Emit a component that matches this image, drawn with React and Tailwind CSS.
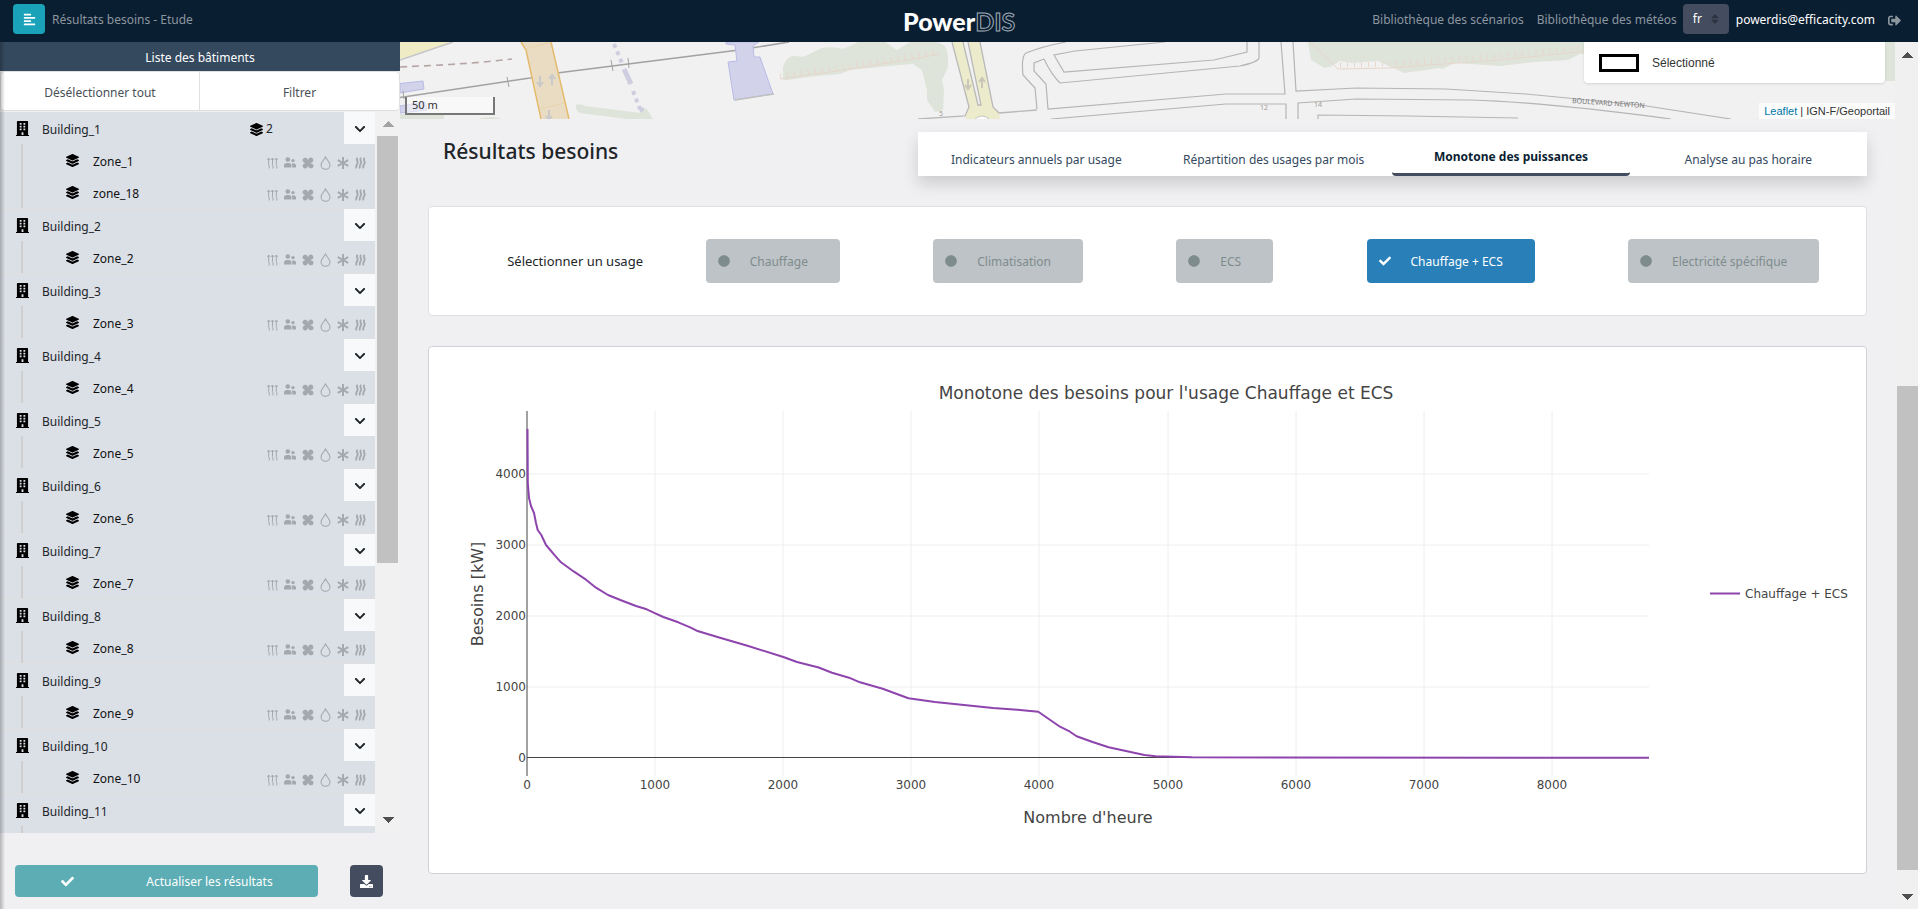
import React, { useState } from "react";
import {
  FaAlignLeft,
  FaAsterisk,
  FaBuilding,
  FaCheck,
  FaChevronDown,
  FaCircle,
  FaDownload,
  FaLayerGroup,
  FaSignOutAlt,
  FaSort,
} from "react-icons/fa";

const BUILDINGS = [
  { name: "Building_1", zones: ["Zone_1", "zone_18"] },
  { name: "Building_2", zones: ["Zone_2"] },
  { name: "Building_3", zones: ["Zone_3"] },
  { name: "Building_4", zones: ["Zone_4"] },
  { name: "Building_5", zones: ["Zone_5"] },
  { name: "Building_6", zones: ["Zone_6"] },
  { name: "Building_7", zones: ["Zone_7"] },
  { name: "Building_8", zones: ["Zone_8"] },
  { name: "Building_9", zones: ["Zone_9"] },
  { name: "Building_10", zones: ["Zone_10"] },
  { name: "Building_11", zones: [] },
];

const TABS = [
  "Indicateurs annuels par usage",
  "Répartition des usages par mois",
  "Monotone des puissances",
  "Analyse au pas horaire",
];

const USAGES = ["Chauffage", "Climatisation", "ECS", "Chauffage + ECS", "Electricité spécifique"];

function HeatIcon() {
  return (
    <svg viewBox="0 0 11 12" className="h-3 w-[11px]" fill="none" stroke="currentColor" strokeWidth="1">
      <path d="M2 11.500c1.200-2-1-3.500-.3-5.500V1.500M5.800 11.500c1.200-2-1-3.500-.3-5.500V1.500M9.600 11.500c1.200-2-1-3.500-.3-5.500V1.500" />
      <path d="M.3 2.800 1.700 1 3.100 2.800M4.100 2.800 5.500 1l1.400 1.800M7.900 2.800 9.300 1l1.400 1.800" />
    </svg>
  );
}

function PeopleIcon() {
  return (
    <svg viewBox="0 0 12 11" className="h-[11px] w-3" fill="currentColor">
      <circle cx="3.800" cy="2.500" r="2.300" />
      <circle cx="9" cy="3.600" r="1.700" />
      <path d="M0 10.500V8.600C0 7 1.200 6 2.800 6h2C6.400 6 7.400 7 7.400 8.600v1.900Z" />
      <path d="M8.200 10.500V8.400c0-.8-.3-1.400-.7-1.900h2.300c1.300 0 2.200.8 2.200 2v2Z" />
    </svg>
  );
}

function FanIcon() {
  const blade = "M6 6C4.200 6.400.6 5.900.5 3.300.5 1.200 2.400.4 4 .8 5.700 1.300 6.300 4 6 6Z";
  return (
    <svg viewBox="0 0 12 12" className="h-3 w-3" fill="currentColor">
      <path d={blade} />
      <path d={blade} transform="rotate(90 6 6)" />
      <path d={blade} transform="rotate(180 6 6)" />
      <path d={blade} transform="rotate(270 6 6)" />
    </svg>
  );
}

function DropIcon() {
  return (
    <svg viewBox="0 0 11 14" className="h-[14px] w-[11px]" fill="none" stroke="currentColor" strokeWidth="1.1">
      <path d="M5.500 1C4.300 3.600 1 6.300 1 9a4.500 4.300 0 0 0 9 0C10 6.300 6.700 3.600 5.500 1Z" />
    </svg>
  );
}

function WavesIcon() {
  return (
    <svg viewBox="0 0 11 12" className="h-3 w-[11px]" fill="none" stroke="currentColor" strokeWidth="1.800">
      <path d="M2.500.8C.5 3.300 3.500 4.200 2.600 6.200S.5 9 1.500 11.300M6 .8C4 3.300 7 4.200 6.100 6.200S4 9 5 11.300M9.500.8C7.500 3.300 10.500 4.200 9.600 6.200S7.500 9 8.500 11.300" />
    </svg>
  );
}

function Caret({ up, className }) {
  return (
    <svg viewBox="0 0 12 6" className={className} fill="currentColor" shapeRendering="crispEdges">
      <path d={up ? "M0 6 6 0l6 6Z" : "M0 0h12L6 6Z"} />
    </svg>
  );
}

function Header() {
  return (
    <header className="relative flex h-[42px] shrink-0 items-center justify-between bg-[#0a1e32] pb-1 pl-[13px] pr-[17px] text-[#8c969f]">
      <div className="flex items-center gap-[7px]">
        <button aria-label="Menu" className="flex h-[30px] w-8 items-center justify-center rounded bg-[#19a2b8] text-white">
          <FaAlignLeft size={13} />
        </button>
        <span className="pt-[2px]">Résultats besoins - Etude</span>
      </div>
      <div className="absolute left-1/2 top-[7px] flex -translate-x-[56px] font-['Lato',sans-serif] text-[25px] font-black leading-[28px]">
        <span className="text-white">Power</span>
        <span className="font-bold text-[#0a1e32] [-webkit-text-stroke:1px_#a0abb6]">DIS</span>
      </div>
      <nav className="flex items-center">
        <a href="#scenarios" className="mr-[13px] pt-[2px]">Bibliothèque des scénarios</a>
        <a href="#meteos" className="mr-[6px] pt-[2px]">Bibliothèque des météos</a>
        <div className="relative mr-[7px]">
          <select
            aria-label="Langue"
            defaultValue="fr"
            className="h-[30px] w-[46px] appearance-none rounded bg-[#434d5f] pl-[10px] text-white"
          >
            <option value="fr">fr</option>
            <option value="en">en</option>
          </select>
          <FaSort size={12} className="pointer-events-none absolute right-2 top-[9px] text-[#2b3440]" />
        </div>
        <span className="mr-[13px] pt-[2px] text-white">powerdis@efficacity.com</span>
        <button aria-label="Se déconnecter" className="pt-[2px]">
          <FaSignOutAlt size={13} />
        </button>
      </nav>
    </header>
  );
}

function Building({ name, zones }) {
  return (
    <li className="border-b border-[#dfdfdf]">
      <div className="flex h-8 items-center pl-4 text-[#212529]">
        <FaBuilding size={15} className="w-[13px] text-black" />
        <span className="ml-[13px] w-[208px] pt-[3px]">{name}</span>
        {zones.length > 1 && (
          <span className="flex items-center gap-[3px] pt-[2px]">
            <FaLayerGroup size={13} className="text-black" />
            {zones.length}
          </span>
        )}
        <button
          aria-label={`Replier ${name}`}
          className="ml-auto flex h-8 w-[31px] items-center justify-center bg-[#f8f9fb] pt-[2px] text-[#1f2529]"
        >
          <FaChevronDown size={12} />
        </button>
      </div>
      <ul className="ml-[21px] min-h-8 border-l-2 border-[#cfcfcf]">
        {zones.map((zone) => (
          <li key={zone} className="flex h-8 items-center pl-[43px] pr-[9px] text-[#111]">
            <FaLayerGroup size={13} className="text-black" />
            <span className="ml-[14px] pt-[3px]">{zone}</span>
            <span className="ml-auto flex items-center gap-[6px] pt-[5px] text-[#a3a8af]">
              <HeatIcon />
              <PeopleIcon />
              <FanIcon />
              <DropIcon />
              <FaAsterisk size={12} />
              <WavesIcon />
            </span>
          </li>
        ))}
      </ul>
    </li>
  );
}

function Sidebar() {
  return (
    <aside className="relative flex w-[400px] shrink-0 flex-col">
      <h2 className="h-[29px] bg-[#34495e] text-center leading-[31px] text-white">Liste des bâtiments</h2>
      <div className="grid h-10 grid-cols-2 overflow-hidden rounded border border-[#dfdfdf] bg-white text-[#495057]">
        <button className="border-r border-[#dfdfdf] pt-1">Désélectionner tout</button>
        <button className="pt-1">Filtrer</button>
      </div>
      <div className="flex min-h-0 flex-1 pt-px">
        <ul className="min-w-0 flex-1 overflow-hidden bg-[#dbdfe6]">
          {BUILDINGS.map((b) => (
            <Building key={b.name} {...b} />
          ))}
        </ul>
        <div className="flex w-[25px] flex-col items-center justify-between bg-[#f1f1f1] pb-[10px] pt-[9px]">
          <Caret up className="h-[6px] w-3 text-[#a3a3a3]" />
          <div className="mt-[9px] h-[427px] w-[21px] bg-[#c1c1c1]" />
          <Caret className="mt-auto h-[6px] w-3 text-[#505050]" />
        </div>
      </div>
      <div className="flex h-[76px] items-center justify-between pl-[15px] pr-[17px] pt-5 text-white">
        <button className="flex h-8 w-[303px] items-center rounded bg-[#5cadb4]">
          <FaCheck size={13} className="ml-[46px]" />
          <span className="flex-1 pl-[27px] pt-[2px] text-center">Actualiser les résultats</span>
        </button>
        <button aria-label="Télécharger" className="flex h-8 w-[33px] items-center justify-center rounded bg-[#434d5f]">
          <FaDownload size={13} />
        </button>
      </div>
      <div className="pointer-events-none absolute inset-y-0 left-0 w-[5px] bg-gradient-to-r from-black/25 to-transparent" />
    </aside>
  );
}

function RoadArrow({ x, y, down, color }) {
  const d = down ? "M0-5V4M-3 1 0 5 3 1" : "M0 5V-4M-3-1 0-5 3-1";
  return <path d={d} transform={`translate(${x} ${y})`} fill="none" stroke={color} strokeWidth="2" />;
}

function MapStrip() {
  return (
    <section className="relative h-[77px] shrink-0 overflow-hidden bg-[#f1f1f1]">
      <svg viewBox="400 42 1495 77" preserveAspectRatio="xMinYMin slice" className="block h-full w-full" fill="none">
        <path d="M400 42h52l-52 17Z" fill="#efecc5" />
        <path d="M400 60 453 42" stroke="#c4c4c4" strokeWidth="1.500" />
        <path d="M400 67c40-2 70-3 112-8" stroke="#b5a5a5" strokeWidth="1.600" strokeDasharray="7 5" />
        <path d="M400 83.500 423 81l1 8-24 4ZM400 106l25-4 2 8-27 3Z" fill="#d2d2ea" stroke="#b9bbe6" />
        <path d="M400 114h44v5h-44ZM480 118l10-1 10 1v1h-20Z" fill="#dee4d9" />
        <path d="M400 97.500 530 78l27-5 182-23 50-8" stroke="#a2a2a2" strokeWidth="1.600" />
        <path d="m507 77 2 10M611 60l2 11M628 58l1 10M403 91l1 8" stroke="#a2a2a2" />
        <path d="m521 42 5 8 15 69h28L551 42Z" fill="#e9dcc2" />
        <path d="m521 42 5 8 15 69M551 42l18 77" stroke="#e4bb6d" strokeWidth="1.500" />
        <path d="m525 49 28-7M539 109l26-6" stroke="#ead0a0" strokeWidth=".6" />
        <RoadArrow x={540} y={81} down color="#c9c9c9" />
        <RoadArrow x={552} y={80} color="#c9c9c9" />
        <RoadArrow x={549} y={115} down color="#c9c9c9" />
        <path d="m614 44 8 19M633 91l7 18" stroke="#cfcde0" strokeWidth="4" strokeDasharray="4 4" />
        <path d="m624 69 7 15M641 108l8 16" stroke="#cfcde0" strokeWidth="5" />
        <path d="M576 105q5-2 9 1l56 7 5-5 7 11h-27l-46-6q-5-3-4-8Z" fill="#dee4d9" />
        <path d="M726 42h33l-6 4 1 11h6l13 37-39 6-6-38 9-1-2-16-9-1Z" fill="#d2d2ea" stroke="#b9bbe6" />
        <path d="m735 100 39-6" stroke="#c0c0c0" strokeWidth="1.500" />
        <path
          d="M783 80V67q3-9 9-11 6 0 11 1l19-9q10-2 21 1l14-6v-1h28l12 8 13-8h25q8 1 11 6l2 8v11l-6 13 2 10-1 20-8 2-8-12v-10l-5-20-9-6-13 1-20 2-30 3-10 4q-30 2-52 6Z"
          fill="#dee4d9"
        />
        <path d="m780 79 70-10 70-11 19-4" stroke="#e8d6cc" />
        <path d="m780 76 70-10 70-11 19-4" stroke="#e8d6cc" strokeWidth="5" strokeDasharray="1 6" />
        <path d="m952 42 17 65-4 12h35l-1-6-6-6-13-65Z" fill="#ecebcb" />
        <path d="m963 42 15 63h3L968 42Z" fill="#f1f1f1" />
        <path d="m952 42 17 65-4 9-47 3M980 42l13 65 6 6 38-3M963 42l15 63h3L968 42" stroke="#b9b9b9" strokeWidth="1.300" />
        <path d="M975 119q7-6 14 0" stroke="#c5c5c5" fill="#fff" />
        <RoadArrow x={968} y={84} down color="#c9c6b8" />
        <RoadArrow x={982} y={83} color="#c9c6b8" />
        <g stroke="#b5b5b5" strokeWidth="1.200">
          <path d="M1066 42q-22 4-40 11-5 3-3 22l12 13 2 21" />
          <path d="m1165 42-90 9-21 4 10 17 150-12 33-8V42" />
          <path d="m1044 59-10 4v8l12 13 2 25 178-15h59l-4-52M1044 59q7 15 16 24l180-17q18-4 19-8V42" />
          <path d="m1293 42 3 49 60-3 90 1 80 5 114 11q40 6 91 14" />
          <path d="m1051 119 175-15h60v15M1298 119v-16l58-4 115 1q70 2 200 19M1318 119v-4l90 1 110 2" />
        </g>
        <path
          d="M1308 42l3 18 14 8 7-2 8-5 12 2 26-2 26 12 36-5 2 1 13-6 45 3 35-4 33-2 12-6h20v6h280v21h15V42Z"
          fill="#dee4d9"
        />
        <path d="m1310 42 28 27 50-1 110-8 100-10" stroke="#e8d6cc" />
        <path d="m1340 65 48-1 110-8 100-10" stroke="#e8d6cc" strokeWidth="5" strokeDasharray="1 6" />
        <g fill="#a59b97" className="font-['Noto_Sans',sans-serif] text-[7px]">
          <text x="939" y="116">5</text>
          <text x="1260" y="110">12</text>
          <text x="1314" y="107">14</text>
          <text x="1572" y="103" fill="#777" transform="rotate(4 1572 103)">BOULEVARD NEWTON</text>
        </g>
      </svg>
      <div className="absolute bottom-[4px] left-[5px] h-[18px] w-[90px] border-2 border-t-0 border-[#777] bg-white/50 pl-[5px] text-[11px] leading-[16px] text-[#333]">
        50 m
      </div>
      <div className="absolute right-[10px] top-0 flex h-[41px] w-[301px] items-center gap-[13px] rounded-b bg-white pl-[15px] font-['Liberation_Sans',sans-serif] text-[12px] text-[#333] shadow">
        <span className="h-[18px] w-10 border-3 border-black" />
        Sélectionné
      </div>
      <div className="absolute bottom-0 right-0 bg-white/80 px-[5px] font-['Liberation_Sans',sans-serif] text-[11px] leading-4 text-[#333]">
        <a href="#leaflet" className="text-[#0078a8]">Leaflet</a> | IGN-F/Geoportail
      </div>
    </section>
  );
}

const CURVE =
  "527.5,429 527.800,483 529,498 531,506 534,513 536,523 537.700,530 541.300,535 546,545 555,555.700 561,562.300 574,571.700 586,579.700 596,587.700 608,595 621,600.300 636,606 646.700,609.300 655.300,613.300 663.300,617 678.300,622.300 690.700,627.700 696.700,630.700 720,637.700 748.300,646 783.300,657 797,662 818.700,667.500 832,672.700 849,677.700 860,682.300 882.700,688.700 908.400,698.300 935,702 993,708 1017.400,709.700 1038.300,711.700 1060,726.700 1070,731.700 1076.600,736.300 1092.600,742 1108.600,747.300 1144.400,755 1155.600,756.300 1192,757.300 1649,757.800";

function LoadChart() {
  const xs = [0, 1, 2, 3, 4, 5, 6, 7, 8];
  const ys = [0, 1, 2, 3, 4];
  const xPos = (k) => Math.round(527 + k * 128.1);
  const yPos = (k) => Math.round(757.5 - k * 71);
  return (
    <svg
      viewBox="429 347 1437 526"
      className="block h-auto w-full font-['DejaVu_Sans',Verdana,sans-serif] text-[12px]"
      fill="#444"
      role="img"
      aria-label="Monotone des besoins pour l'usage Chauffage et ECS"
    >
      <g stroke="#eee" strokeWidth="1">
        {xs.slice(1).map((k) => (
          <line key={k} x1={xPos(k)} x2={xPos(k)} y1="411" y2="776" />
        ))}
        {ys.slice(1).map((k) => (
          <line key={k} x1="527" x2="1649" y1={yPos(k)} y2={yPos(k)} />
        ))}
      </g>
      <line x1="527" x2="527" y1="411" y2="776" stroke="#444" strokeWidth="1" />
      <line x1="527" x2="1649" y1="757.5" y2="757.5" stroke="#444" strokeWidth="1" />
      <polyline points={CURVE} fill="none" stroke="#8e44ad" strokeWidth="2" strokeLinejoin="round" />
      <g textAnchor="middle">
        {xs.map((k) => (
          <text key={k} x={xPos(k)} y="789">{k * 1000}</text>
        ))}
      </g>
      <g textAnchor="end">
        {ys.map((k) => (
          <text key={k} x="526" y={yPos(k) + 4}>{k * 1000}</text>
        ))}
      </g>
      <text x="1166" y="399" textAnchor="middle" className="text-[17px]">
        Monotone des besoins pour l'usage Chauffage et ECS
      </text>
      <text x="1088" y="823" textAnchor="middle" className="text-[16px]">Nombre d'heure</text>
      <text transform="translate(483 594) rotate(-90)" textAnchor="middle" className="text-[16px]">Besoins [kW]</text>
      <line x1="1710" x2="1740" y1="593.5" y2="593.5" stroke="#8e44ad" strokeWidth="2" />
      <text x="1745" y="598">Chauffage + ECS</text>
    </svg>
  );
}

function Results() {
  const [tab, setTab] = useState(2);
  const [usage, setUsage] = useState(3);
  return (
    <main className="flex min-w-0 flex-1 flex-col overflow-hidden">
      <MapStrip />
      <div className="flex flex-col gap-[30px] pl-7 pr-7 pt-[13px]">
        <div className="flex items-start justify-between pl-[15px]">
          <h1 className="pt-1 text-[21px] font-medium leading-[30px] text-[#212529]">Résultats besoins</h1>
          <div role="tablist" className="grid h-11 w-2/3 grid-cols-4 bg-white shadow-[0_8px_16px_rgba(0,0,0,0.15)]">
            {TABS.map((label, i) => (
              <button
                key={label}
                role="tab"
                aria-selected={tab === i}
                onClick={() => setTab(i)}
                className={
                  tab === i
                    ? "rounded border-b-3 border-[#434d5f] pt-[9px] font-bold text-[#0a1e32]"
                    : "rounded pt-3 text-[#34495e]"
                }
              >
                {label}
              </button>
            ))}
          </div>
        </div>
        <div className="flex h-[110px] items-center rounded border border-[#dfdfdf] bg-white">
          <span className="w-[230px] pr-4 pt-px text-right text-[13px] text-[#212529]">Sélectionner un usage</span>
          <div className="flex flex-1 items-center justify-around">
            {USAGES.map((label, i) => (
              <button
                key={label}
                onClick={() => setUsage(i)}
                className={
                  usage === i
                    ? "flex h-11 items-center gap-5 rounded bg-[#2980b9] pl-3 pr-8 text-white"
                    : "flex h-11 items-center gap-5 rounded bg-[#bdc3c7] pl-3 pr-8 text-[#7f8c8d]"
                }
              >
                {usage === i ? <FaCheck size={12} /> : <FaCircle size={12} />}
                <span className="pt-px">{label}</span>
              </button>
            ))}
          </div>
        </div>
        <div className="rounded border border-[#cfd1d4] bg-white">
          <LoadChart />
        </div>
      </div>
    </main>
  );
}

export default function App() {
  return (
    <div className="flex h-screen flex-col overflow-hidden bg-[#f0f0f3] font-['Noto_Sans',sans-serif] text-[12px]">
      <Header />
      <div className="flex min-h-0 flex-1">
        <Sidebar />
        <Results />
        <div className="flex w-[23px] shrink-0 flex-col items-center bg-[#f0f0f1] pb-[9px] pl-px pt-[10px] text-[#505050]">
          <Caret up className="h-[6px] w-[11px]" />
          <div className="mt-auto h-[484px] w-[21px] bg-[#c1c1c1]" />
          <Caret className="mt-6 h-[6px] w-[11px]" />
        </div>
      </div>
    </div>
  );
}
